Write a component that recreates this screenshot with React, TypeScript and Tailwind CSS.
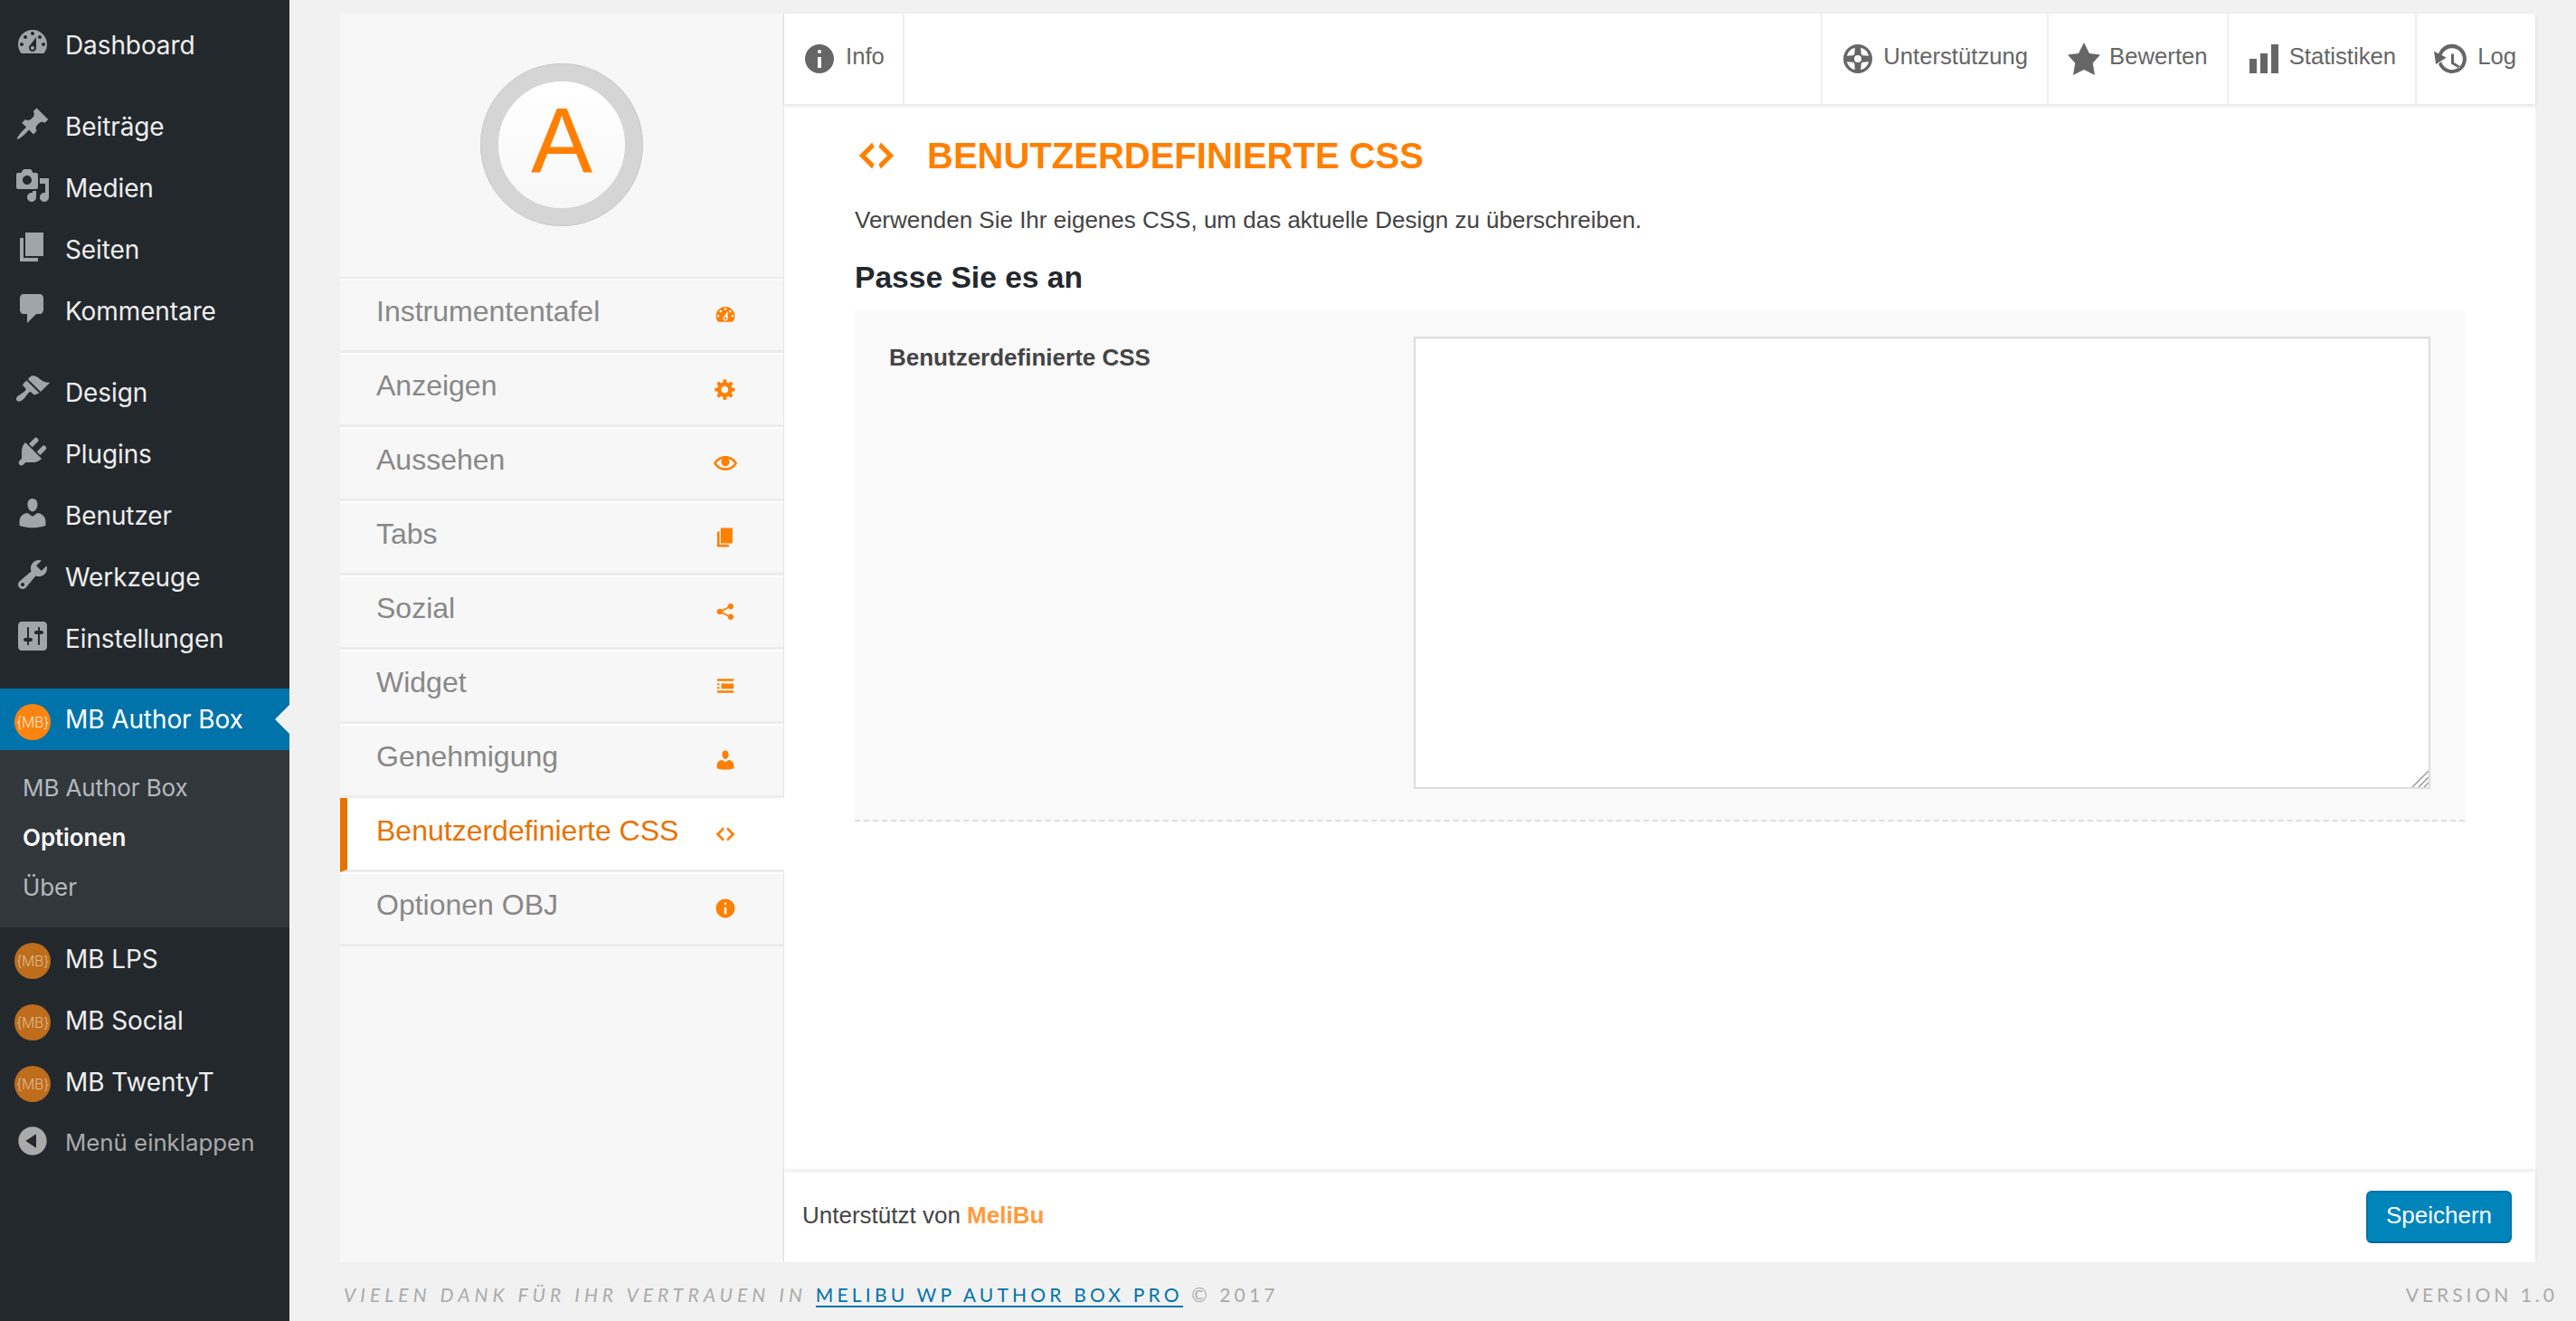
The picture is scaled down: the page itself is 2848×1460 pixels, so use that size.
import type { ReactNode } from 'react'

// Dashicons paths (20x20 box)
const ICONS: Record<string, string> = {
  dashboard: 'M3.76 16h12.48c1.1-1.37 1.76-3.11 1.76-5 0-4.42-3.58-8-8-8s-8 3.58-8 8c0 1.89.66 3.63 1.76 5zM10 4c.55 0 1 .45 1 1s-.45 1-1 1-1-.45-1-1 .45-1 1-1zM6 6c.55 0 1 .45 1 1s-.45 1-1 1-1-.45-1-1 .45-1 1-1zm8 0c.55 0 1 .45 1 1s-.45 1-1 1-1-.45-1-1 .45-1 1-1zm-5.37 5.55L12 7v6c0 1.1-.9 2-2 2s-2-.9-2-2c0-.57.24-1.08.63-1.45zM4 10c.55 0 1 .45 1 1s-.45 1-1 1-1-.45-1-1 .45-1 1-1zm12 0c.55 0 1 .45 1 1s-.45 1-1 1-1-.45-1-1 .45-1 1-1zm-5 3c0-.55-.45-1-1-1s-1 .45-1 1 .45 1 1 1 1-.45 1-1z',
  pin: 'M10.44 3.02l1.82-1.82 6.36 6.35-1.83 1.82c-1.05-.68-2.48-.57-3.41.36l-.75.75c-.92.93-1.04 2.35-.35 3.41l-1.83 1.82-2.41-2.41-2.8 2.79c-.42.42-3.38 2.71-3.8 2.29s1.86-3.39 2.28-3.81l2.79-2.79L4.1 9.36l1.83-1.82c1.05.69 2.48.57 3.4-.36l.75-.75c.93-.92 1.05-2.35.36-3.41z',
  media: 'M13 11V4c0-.55-.45-1-1-1h-1.67L9 1H5L3.67 3H2c-.55 0-1 .45-1 1v7c0 .55.45 1 1 1h10c.55 0 1-.45 1-1zM7 4.5c1.38 0 2.5 1.12 2.5 2.5S8.38 9.5 7 9.5 4.5 8.38 4.5 7 5.62 4.5 7 4.5zM14 6h5v10.5c0 1.38-1.12 2.5-2.5 2.5S14 17.88 14 16.5s1.12-2.5 2.5-2.5c.17 0 .34.02.5.05V9h-3V6zm-4 8.05V13h2v3.5c0 1.38-1.12 2.5-2.5 2.5S7 17.88 7 16.5 8.12 14 9.5 14c.17 0 .34.02.5.05z',
  page: 'M6 15V2h10v13H6zm-1 1h8v2H3V5h2v11z',
  comment: 'M5 2h9c1.1 0 2 .9 2 2v7c0 1.1-.9 2-2 2h-2l-5 5v-5H5c-1.1 0-2-.9-2-2V4c0-1.1.9-2 2-2z',
  brush: 'M14.48 11.06L7.41 3.99l1.5-1.5c.5-.56 2.3-.47 3.51.32 1.21.8 1.43 1.28 2.91 2.1 1.18.64 2.45 1.26 4.45.85zm-.71.71L6.7 4.7 4.93 6.47c-.39.39-.39 1.02 0 1.41l1.06 1.06c.39.39.39 1.03 0 1.42-.6.6-1.43 1.11-2.21 1.69-.35.26-.7.53-1.01.84C1.43 13.23.4 14.94 1.4 15.94c1 1 2.71-.03 4.05-1.37.31-.31.58-.66.84-1.01.58-.78 1.09-1.61 1.69-2.21.39-.39 1.02-.39 1.41 0l1.06 1.06c.39.39 1.02.39 1.41 0z',
  plugin: 'M13.11 4.36L9.87 7.6 8 5.73l3.24-3.24c.35-.34 1.05-.2 1.56.32.52.51.66 1.21.31 1.55zm-8 1.77l.91-1.12 9.01 9.01-1.19.84c-.71.71-2.63 1.16-3.82 1.16H6.14L4.9 17.26c-.59.59-1.54.59-2.12 0-.59-.58-.59-1.53 0-2.12l1.24-1.24v-3.88c0-1.13.4-3.19 1.09-3.89zm7.26 3.97l3.24-3.24c.34-.35 1.04-.21 1.55.31.52.51.66 1.21.31 1.55l-3.24 3.25z',
  user: 'M10 9.25c-2.27 0-2.73-3.44-2.73-3.44C7 4.02 7.82 2 9.97 2c2.16 0 2.98 2.02 2.71 3.81 0 0-.41 3.44-2.68 3.44zm0 2.57L12.72 10c2.39 0 4.52 2.33 4.52 4.53v2.49s-3.65 1.13-7.24 1.13c-3.65 0-7.24-1.13-7.24-1.13v-2.49c0-2.25 1.94-4.53 4.47-4.53z',
  wrench: 'M16.68 9.77c-1.34 1.34-3.3 1.67-4.95.99l-5.41 6.52c-.99.99-2.59.99-3.58 0s-.99-2.59 0-3.57l6.52-5.42c-.68-1.65-.35-3.61.99-4.95 1.28-1.28 3.12-1.62 4.72-1.06l-2.89 2.89 2.82 2.82 2.86-2.87c.53 1.58.18 3.39-1.08 4.65zM3.81 16.21c.4.39 1.04.39 1.43 0 .4-.4.4-1.04 0-1.43-.39-.4-1.03-.4-1.43 0-.39.39-.39 1.03 0 1.43z',
  settings: 'M18 16V4c0-1.1-.9-2-2-2H4c-1.1 0-2 .9-2 2v12c0 1.1.9 2 2 2h12c1.1 0 2-.9 2-2zM8 11h1c.55 0 1 .45 1 1s-.45 1-1 1H8v1.5c0 .28-.22.5-.5.5s-.5-.22-.5-.5V13H6c-.55 0-1-.45-1-1s.45-1 1-1h1V5.5c0-.28.22-.5.5-.5s.5.22.5.5V11zm5-2h-1c-.55 0-1-.45-1-1s.45-1 1-1h1V5.5c0-.28.22-.5.5-.5s.5.22.5.5V7h1c.55 0 1 .45 1 1s-.45 1-1 1h-1v5.5c0 .28-.22.5-.5.5s-.5-.22-.5-.5V9z',
  collapse: 'M10 2.16c4.33 0 7.84 3.51 7.84 7.84s-3.51 7.84-7.84 7.84S2.16 14.33 2.16 10 5.71 2.16 10 2.16zm2 11.72V6.12L6.18 9.97z',
  gear: 'M18 12h-2.18c-.17.7-.44 1.35-.81 1.93l1.54 1.54-2.1 2.1-1.54-1.54c-.58.36-1.23.63-1.91.79V19H8v-2.18c-.68-.16-1.33-.43-1.91-.79l-1.54 1.54-2.12-2.12 1.54-1.54c-.36-.58-.63-1.23-.79-1.91H1V9.03h2.17c.16-.7.44-1.35.8-1.94L2.43 5.55l2.1-2.1 1.54 1.54c.58-.37 1.24-.64 1.93-.81V2h3v2.18c.68.16 1.33.43 1.91.79l1.54-1.54 2.12 2.12-1.54 1.54c.36.59.64 1.24.8 1.94H18V12zm-8.5 1.5c1.66 0 3-1.34 3-3s-1.34-3-3-3-3 1.34-3 3 1.34 3 3 3z',
  eye: 'M19.7 9.4C17.7 6 14 3.9 10 3.9S2.3 6 .3 9.4L0 10l.3.6c2 3.4 5.7 5.5 9.7 5.5s7.7-2.1 9.7-5.5l.3-.6-.3-.6zM10 14.1c-3.1 0-6-1.6-7.7-4.1C3.6 8 5.7 6.6 8 6.1c-.9.6-1.5 1.7-1.5 2.9 0 1.9 1.6 3.5 3.5 3.5s3.5-1.6 3.5-3.5c0-1.2-.6-2.3-1.5-2.9 2.3.5 4.4 1.9 5.7 3.9-1.7 2.5-4.6 4.1-7.7 4.1z',
  share: 'M14.5 12c1.38 0 2.5 1.12 2.5 2.5S15.88 17 14.5 17 12 15.88 12 14.5c0-.13.01-.26.03-.38l-4.9-2.45c-.45.52-1.12.83-1.88.83-1.38 0-2.5-1.12-2.5-2.5s1.12-2.5 2.5-2.5c.76 0 1.43.31 1.88.83l4.9-2.45c-.02-.12-.03-.25-.03-.38C12 4.12 13.12 3 14.5 3S17 4.12 17 5.5 15.88 8 14.5 8c-.76 0-1.43-.31-1.88-.83l-4.9 2.45c.02.12.03.25.03.38s-.01.26-.03.38l4.9 2.45c.45-.52 1.12-.83 1.88-.83z',
  widgets: 'M3 4h14v2H3zM3 8h2v1.5H3zM3 11h2v1.5H3zM6.5 8H17v4.5H6.5zM3 14h14v2H3z',
  code: 'M9 6l-4 4 4 4-1 2-6-6 6-6zm2 8l4-4-4-4 1-2 6 6-6 6z',
  info: 'M10 2c4.42 0 8 3.58 8 8s-3.58 8-8 8-8-3.58-8-8 3.58-8 8-8zm1 4c0-.55-.45-1-1-1s-1 .45-1 1 .45 1 1 1 1-.45 1-1zm0 9V9H9v6h2z',
  star: 'M10 1l3 6 6 .75-4.12 4.62L16 19l-6-3-6 3 1.13-6.63L1 7.75 7 7z',
  chart: 'M18 18V2h-4v16h4zm-6 0V7H8v11h4zm-6 0v-8H2v8h4z',
  backup: 'M13.65 2.88c3.93 2.01 5.48 6.83 3.47 10.76s-6.83 5.48-10.76 3.47c-1.87-.96-3.2-2.56-3.86-4.4l1.64-1.03c.45 1.57 1.52 2.95 3.07 3.74 2.95 1.51 6.57.34 8.08-2.61 1.51-2.95.34-6.57-2.61-8.08-2.95-1.5-6.57-.34-8.08 2.61-.12.23-.22.46-.31.7l2.54 1.28-5.78 3.67L.01 5.85l2.53 1.28c.12-.31.25-.62.41-.93 2.01-3.93 6.83-5.48 10.7-3.32zM11 7.24V12l3.5 2.07-.75 1.16L9.5 12.8V7.24H11z',
  sos: 'M10 2a8 8 0 1 1 0 16 8 8 0 0 1 0-16zM11.63 3.91A6.3 6.3 0 0 1 16.09 8.37L12.62 8.16 11.84 7.38zM16.09 11.63A6.3 6.3 0 0 1 11.63 16.09L11.84 12.62 12.62 11.84zM8.37 16.09A6.3 6.3 0 0 1 3.91 11.63L7.38 11.84 8.16 12.62zM3.91 8.37A6.3 6.3 0 0 1 8.37 3.91L8.16 7.38 7.38 8.16zM10 8a2 2 0 1 0 0 4 2 2 0 0 0 0-4z',
}

function Dashicon({ name, className }: { name: string; className: string }) {
  return (
    <svg viewBox="0 0 20 20" className={className} fill="currentColor">
      <path fillRule="evenodd" d={ICONS[name]} />
    </svg>
  )
}

const MENU_TOP = [
  { icon: 'dashboard', label: 'Dashboard', gap: true },
  { icon: 'pin', label: 'Beiträge' },
  { icon: 'media', label: 'Medien' },
  { icon: 'page', label: 'Seiten' },
  { icon: 'comment', label: 'Kommentare', gap: true },
  { icon: 'brush', label: 'Design' },
  { icon: 'plugin', label: 'Plugins' },
  { icon: 'user', label: 'Benutzer' },
  { icon: 'wrench', label: 'Werkzeuge' },
  { icon: 'settings', label: 'Einstellungen', gap: true },
]

const OPTION_TABS = [
  { icon: 'dashboard', label: 'Instrumententafel' },
  { icon: 'gear', label: 'Anzeigen' },
  { icon: 'eye', label: 'Aussehen' },
  { icon: 'page', label: 'Tabs' },
  { icon: 'share', label: 'Sozial' },
  { icon: 'widgets', label: 'Widget' },
  { icon: 'user', label: 'Genehmigung' },
  { icon: 'code', label: 'Benutzerdefinierte CSS', active: true },
  { icon: 'info', label: 'Optionen OBJ' },
]

const RIGHT_TABS = [
  { icon: 'sos', label: 'Unterstützung' },
  { icon: 'star', label: 'Bewerten' },
  { icon: 'chart', label: 'Statistiken' },
  { icon: 'backup', label: 'Log' },
]

function MbLogo({ dim }: { dim?: boolean }) {
  return (
    <span
      className={
        dim
          ? 'mt-[5px] flex h-[40px] w-[40px] items-center justify-center rounded-full bg-[#bd6d1c] text-[16px] font-light leading-none tracking-[-0.5px] text-[#e2b78d]'
          : 'mt-[5px] flex h-[40px] w-[40px] items-center justify-center rounded-full bg-[#fb8410] text-[16px] font-light leading-none tracking-[-0.5px] text-[#ffe3c8]'
      }
    >
      {'{MB}'}
    </span>
  )
}

function MenuRow({ icon, children }: { icon: ReactNode; children: ReactNode }) {
  return (
    <div className="flex h-[68px] items-center text-[28px] tracking-[-0.1px] text-[#eeeeee]">
      <span className="flex w-[72px] shrink-0 items-center justify-center">{icon}</span>
      <span className="pt-[1px]">{children}</span>
    </div>
  )
}

function Sidebar() {
  return (
    <aside className="w-[320px] shrink-0 bg-[#23282d] pt-[15px] font-['Inter',sans-serif]">
      {MENU_TOP.map((item) => (
        <div key={item.label} className={item.gap ? 'mb-[22px]' : ''}>
          <MenuRow icon={<Dashicon name={item.icon} className="-mt-[4px] h-[40px] w-[40px] text-[#a0a5aa]" />}>
            {item.label}
          </MenuRow>
        </div>
      ))}

      {/* current plugin + submenu */}
      <div className="relative flex h-[68px] items-center bg-[#0073aa] text-[28px] tracking-[-0.1px] text-white">
        <span className="flex w-[72px] shrink-0 items-center justify-center"><MbLogo /></span>
        <span>MB Author Box</span>
        <span className="absolute right-0 top-[18px] h-0 w-0 border-y-[16px] border-r-[16px] border-y-transparent border-r-[#f1f1f1]" />
      </div>
      <div className="flex h-[196px] flex-col bg-[#32373c] pl-[25px] pt-[14px] text-[26px] tracking-[-0.1px] text-[#b4b9be]">
        <span className="flex h-[55px] items-center">MB Author Box</span>
        <span className="flex h-[55px] items-center font-semibold text-white">Optionen</span>
        <span className="flex h-[55px] items-center">Über</span>
      </div>

      {['MB LPS', 'MB Social', 'MB TwentyT'].map((label) => (
        <MenuRow key={label} icon={<MbLogo dim />}>{label}</MenuRow>
      ))}
      <div className="flex h-[68px] items-center text-[25.8px] text-[#aaaaaa]">
        <span className="flex w-[72px] shrink-0 items-center justify-center">
          <Dashicon name="collapse" className="-mt-[4px] h-[40px] w-[40px] text-[#aaaaaa]" />
        </span>
        <span className="pt-[1px]">Menü einklappen</span>
      </div>
    </aside>
  )
}

function OptionsNav() {
  return (
    <nav className="w-[491px] shrink-0 border-r border-[#e5e5e5] bg-[#f7f7f7]">
      <div className="flex h-[291px] justify-center pt-[55px]">
        <div className="flex h-[180px] w-[180px] items-center justify-center rounded-full border-[20px] border-[#d5d5d5] bg-linear-to-b from-white to-[#f7f7f7] outline outline-1 -outline-offset-1 outline-[#cccccc]">
          <span className="pb-[8px] font-['Liberation_Sans',sans-serif] text-[102px] leading-none text-[#ff7f00]">A</span>
        </div>
      </div>
      <div className="border-t-2 border-[#ececec]">
        {OPTION_TABS.map((tab) => (
          <div
            key={tab.label}
            className={
              tab.active
                ? 'flex h-[82px] items-center justify-between border-b-[3px] border-[#ececec] bg-white pl-[32px] pr-[52px] border-l-[8px] border-l-[#e87200] -mr-px'
                : 'flex h-[82px] items-center justify-between border-b-[3px] border-[#ececec] pl-[40px] pr-[51px] shadow-[inset_0_2px_0_#ffffff]'
            }
          >
            <span className={tab.active ? 'pb-[8px] text-[32px] text-[#e87200]' : 'pb-[8px] text-[32px] text-[#888888]'}>
              {tab.label}
            </span>
            <Dashicon name={tab.icon} className="h-[26px] w-[26px] text-[#ff7f00]" />
          </div>
        ))}
      </div>
    </nav>
  )
}

function TopBar() {
  return (
    <div className="relative flex h-[100px] shrink-0 items-center justify-between bg-white text-[25.7px] text-[#666666] shadow-[0_2px_4px_rgba(0,0,0,0.12)]">
      <div className="flex h-full items-center gap-[9px] border-r-2 border-[#eeeeee] pl-[19px] pr-[20px]">
        <Dashicon name="info" className="h-[40px] w-[40px]" />
        <span className="pb-[6px]">Info</span>
      </div>
      <div className="flex h-full">
        {RIGHT_TABS.map((tab) => (
          <div key={tab.label} className="flex h-full items-center gap-[8px] border-l-2 border-[#eeeeee] pl-[19px] pr-[21px]">
            <Dashicon name={tab.icon} className="h-[40px] w-[40px]" />
            <span className="pb-[6px]">{tab.label}</span>
          </div>
        ))}
      </div>
    </div>
  )
}

function CssForm() {
  return (
    <div className="flex-1 px-[78px] pt-[33px]">
      <h1 className="flex h-[48px] items-center gap-[32px] text-[40px] font-bold leading-[48px] text-[#ff7f00]">
        <Dashicon name="code" className="h-[48px] w-[48px] shrink-0" />
        BENUTZERDEFINIERTE CSS
      </h1>
      <p className="mt-[29px] text-[26px] leading-[36px] text-[#444444]">
        Verwenden Sie Ihr eigenes CSS, um das aktuelle Design zu überschreiben.
      </p>
      <h2 className="mt-[26px] text-[33.6px] font-bold leading-[40px] text-[#23282d]">Passe Sie es an</h2>
      <div className="mt-[16px] flex h-[565px] items-start border-b-2 border-dashed border-[#dddddd] bg-[#f9f9f9] pb-[34px] pl-[38px] pr-[38px] pt-[29px]">
        <label className="mt-[7px] w-[580px] shrink-0 text-[26px] font-bold leading-[32px] text-[#444444]">
          Benutzerdefinierte CSS
        </label>
        <div className="relative flex-1">
          <textarea className="block h-[500px] w-full resize-none border-2 border-[#dddddd] bg-white shadow-[inset_0_1px_2px_rgba(0,0,0,0.07)]" />
          <svg viewBox="0 0 20 20" className="absolute bottom-[2px] right-[2px] h-[20px] w-[20px]" stroke="#999999" strokeWidth="1.5">
            <path d="M2 20L20 2M9 20L20 9M15 20L20 15" />
          </svg>
        </div>
      </div>
    </div>
  )
}

function SaveBar() {
  return (
    <div className="flex h-[100px] shrink-0 items-center justify-between bg-white pl-[20px] pr-[26px] shadow-[0_-2px_4px_rgba(0,0,0,0.1)]">
      <span className="pb-[4px] text-[26px] text-[#444444]">
        Unterstützt von <b className="text-[#ff9a3c]">MeliBu</b>
      </span>
      <button className="h-[58px] w-[161px] rounded-[6px] border-2 border-[#0073aa] border-b-[#006799] bg-[#0085ba] pb-[4px] text-[26px] text-white">
        Speichern
      </button>
    </div>
  )
}

export default function App() {
  return (
    <div className="flex h-[1460px] w-[2848px] overflow-hidden bg-[#f1f1f1] font-['Liberation_Sans',sans-serif]">
      <Sidebar />
      <div className="flex flex-1 flex-col pl-[56px] pt-[15px]">
        <div className="mr-[45px] flex h-[1380px]">
          <OptionsNav />
          <main className="flex min-w-0 flex-1 flex-col bg-white">
            <TopBar />
            <CssForm />
            <SaveBar />
          </main>
        </div>
        <div className="flex h-[65px] items-center justify-between pl-[4px] pr-[20px] pt-[7px] text-[21px] text-[#aaaaaa]">
          <span className="font-['Lato',sans-serif] tracking-[4.1px]">
            <i className="tracking-[5.05px]">VIELEN DANK FÜR IHR VERTRAUEN IN </i>
            <a className="border-b-2 border-[#0073aa] tracking-[4.2px] text-[#0073aa]">MELIBU WP AUTHOR BOX PRO</a>
            {' © 2017'}
          </span>
          <span className="font-['Lato',sans-serif] tracking-[4px]">VERSION 1.0</span>
        </div>
      </div>
    </div>
  )
}
